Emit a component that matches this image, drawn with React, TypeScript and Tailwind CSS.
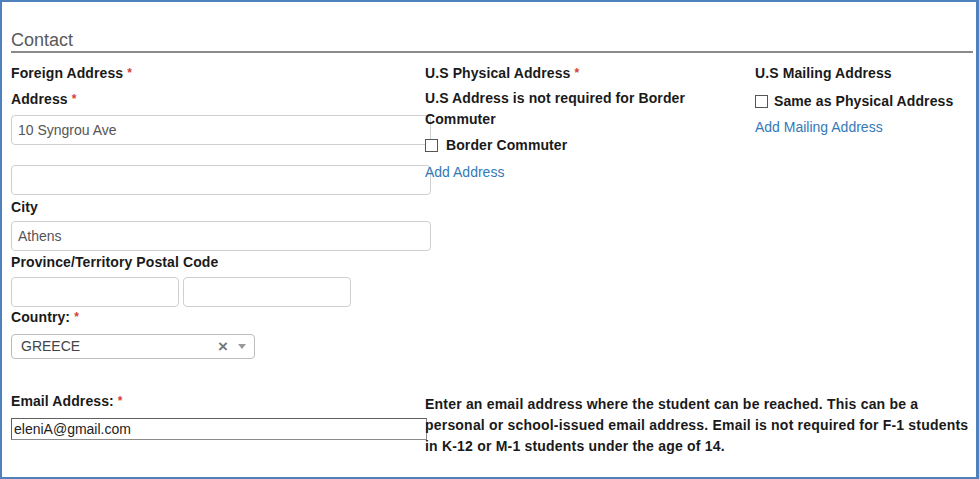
import React from "react";

const Req = () => <span className="text-[#d43f3a] text-[12px] align-top ml-[4px]">*</span>;

const Label = ({ children, className = "" }: { children: React.ReactNode; className?: string }) => (
  <div className={"text-[14px] font-bold leading-[20px] text-[#1a1a1a] tracking-[0.1px] " + className}>{children}</div>
);

const TextBox = ({ value = "", className = "" }: { value?: string; className?: string }) => (
  <div
    className={
      "h-[30px] border border-[#cfcfcf] rounded-[4px] bg-white flex items-center pl-[6px] text-[14px] text-[#555] " +
      className
    }
  >
    {value}
  </div>
);

const Check = ({ className = "" }: { className?: string }) => (
  <span className={"inline-block w-[13px] h-[13px] border border-[#555] bg-white shrink-0 " + className}></span>
);

export default function App() {
  return (
    <div
      className="w-[979px] h-[479px] bg-white border-l-2 border-t-2 border-b-2 border-r-[3px] border-[#4f81bd] pl-[9px] pr-[3px] overflow-hidden"
      style={{ fontFamily: '"Liberation Sans", Arial, sans-serif' }}
    >
      <div className="pt-[27px] text-[18px] leading-[22px] text-[#595959]">Contact</div>
      <div className="h-[2px] bg-[#8a8a8a]"></div>

      <div className="flex mt-[10px]">
        {/* foreign address */}
        <div className="w-[414px] shrink-0">
          <Label>
            Foreign Address<Req />
          </Label>
          <Label className="mt-[6px]">
            Address<Req />
          </Label>
          <TextBox value="10 Syngrou Ave" className="mt-[6px] w-[420px]" />
          <TextBox className="mt-[20px] w-[420px]" />
          <Label className="mt-[2px]">City</Label>
          <TextBox value="Athens" className="mt-[4px] w-[420px]" />
          <Label className="mt-[1px]">Province/Territory Postal Code</Label>
          <div className="flex gap-[4px] mt-[5px]">
            <TextBox className="w-[168px]" />
            <TextBox className="w-[168px]" />
          </div>
          <Label>
            Country:<Req />
          </Label>
          <div className="mt-[7px] w-[244px] h-[25px] border border-[#bdbdbd] rounded-[4px] flex items-center pl-[9px] pr-[8px] text-[14px] text-[#444]">
            <span className="flex-1">GREECE</span>
            <span className="text-[#777] text-[17px] font-bold leading-none mr-[10px]">×</span>
            <svg width="8" height="5" viewBox="0 0 8 5" className="fill-[#999]">
              <path d="M0 0h8L4 5z" />
            </svg>
          </div>
        </div>

        {/* us physical address */}
        <div className="w-[330px] shrink-0">
          <Label>
            U.S Physical Address<Req />
          </Label>
          <div className="mt-[5px] text-[14px] font-bold leading-[21px] text-[#1a1a1a] tracking-[0.1px]">
            U.S Address is not required for Border Commuter
          </div>
          <div className="mt-[5px] h-[20px] flex items-center gap-[8px]">
            <Check />
            <span className="text-[14px] font-bold text-[#1a1a1a] tracking-[0.1px]">Border Commuter</span>
          </div>
          <div className="mt-[7px] text-[14px] leading-[20px] text-[#337ab7]">Add Address</div>
        </div>

        {/* us mailing address */}
        <div className="flex-1">
          <Label>U.S Mailing Address</Label>
          <div className="mt-[8px] h-[20px] flex items-center gap-[6px]">
            <Check className="w-[12px] h-[12px]" />
            <span className="text-[14px] font-bold text-[#1a1a1a] tracking-[0.1px]">Same as Physical Address</span>
          </div>
          <div className="mt-[6px] text-[14px] leading-[20px] text-[#337ab7]">Add Mailing Address</div>
        </div>
      </div>

      <div className="flex mt-[32px]">
        <div className="w-[414px] shrink-0">
          <Label>
            Email Address:<Req />
          </Label>
          <div className="mt-[7px] w-[416px] h-[22px] border border-[#8a8a8a] border-t-[#606060] border-l-[#606060] flex items-center pl-[2px] text-[14px] text-[#222]">
            eleniA@gmail.com
          </div>
        </div>
        <div className="w-[548px] pt-[3px] text-[14px] font-bold leading-[21px] text-[#1a1a1a] tracking-[0.2px]">
          Enter an email address where the student can be reached. This can be a personal or school-issued email
          address. Email is not required for F-1 students in K-12 or M-1 students under the age of 14.
        </div>
      </div>
    </div>
  );
}
